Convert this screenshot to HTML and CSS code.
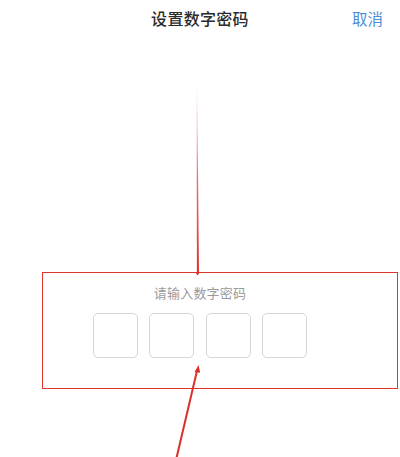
FILE: index.html
```html
<!DOCTYPE html>
<html lang="zh">
<head>
<meta charset="utf-8">
<link rel="stylesheet" href="styles.css">
</head>
<body>
<div class="page">
  <header class="header">
    <div class="title">设置数字密码</div>
    <div class="cancel">取消</div>
  </header>
  <section class="pin-box">
    <div class="hint">请输入数字密码</div>
    <div class="cells">
      <div class="cell"></div>
      <div class="cell"></div>
      <div class="cell"></div>
      <div class="cell"></div>
    </div>
  </section>
  <svg class="annot" width="400" height="457" viewBox="0 0 400 457">
    <defs>
      <linearGradient id="fade" x1="0" y1="0" x2="0" y2="1">
        <stop offset="0" stop-color="#e0302c" stop-opacity="0"/>
        <stop offset="0.5" stop-color="#e0302c" stop-opacity="0.7"/>
        <stop offset="1" stop-color="#e0302c" stop-opacity="1"/>
      </linearGradient>
    </defs>
    <polygon points="196.6,84 197.2,84 199,274 196.9,274" fill="url(#fade)"/>
    <path d="M197.5,275.5 l-2,-3 h4 z" fill="#e0302c"/>
    <line x1="176.5" y1="458" x2="197.2" y2="370" stroke="#d9302b" stroke-width="2"/>
    <path d="M198.5,365 L194.6,372 L200.2,372.8 Z" fill="#d9302b"/>
  </svg>
</div>
</body>
</html>
```
FILE: styles.css
```css
html, body {
  margin: 0;
  padding: 0;
  background: #ffffff;
}
body {
  font-family: "Noto Sans CJK SC", "Noto Sans", sans-serif;
}
.page {
  position: relative;
  width: 400px;
  height: 457px;
  overflow: hidden;
}
.header {
  position: relative;
  height: 36px;
  display: flex;
  align-items: center;
  justify-content: center;
}
.title {
  font-size: 16px;
  font-weight: 500;
  color: #2b2b2b;
  letter-spacing: 0.3px;
  line-height: 36px;
}
.cancel {
  position: absolute;
  right: 17px;
  top: 0;
  line-height: 36px;
  font-size: 15.5px;
  color: #4c8ed8;
}
.pin-box {
  margin: 236px 0 0 42px;
  width: 356px;
  height: 117px;
  box-sizing: border-box;
  border: 1.5px solid #e0342f;
  padding: 11px 40px 0 0;
  display: flex;
  flex-direction: column;
  align-items: center;
}
.hint {
  font-size: 13px;
  line-height: 18px;
  color: #9a9a9a;
  letter-spacing: 0.2px;
}
.cells {
  margin-top: 10.5px;
  display: flex;
  gap: 11.3px;
}
.cell {
  width: 45px;
  height: 45px;
  box-sizing: border-box;
  border: 1px solid #d6d6d6;
  border-radius: 5px;
}
.annot {
  position: absolute;
  left: 0;
  top: 0;
  pointer-events: none;
}
```
